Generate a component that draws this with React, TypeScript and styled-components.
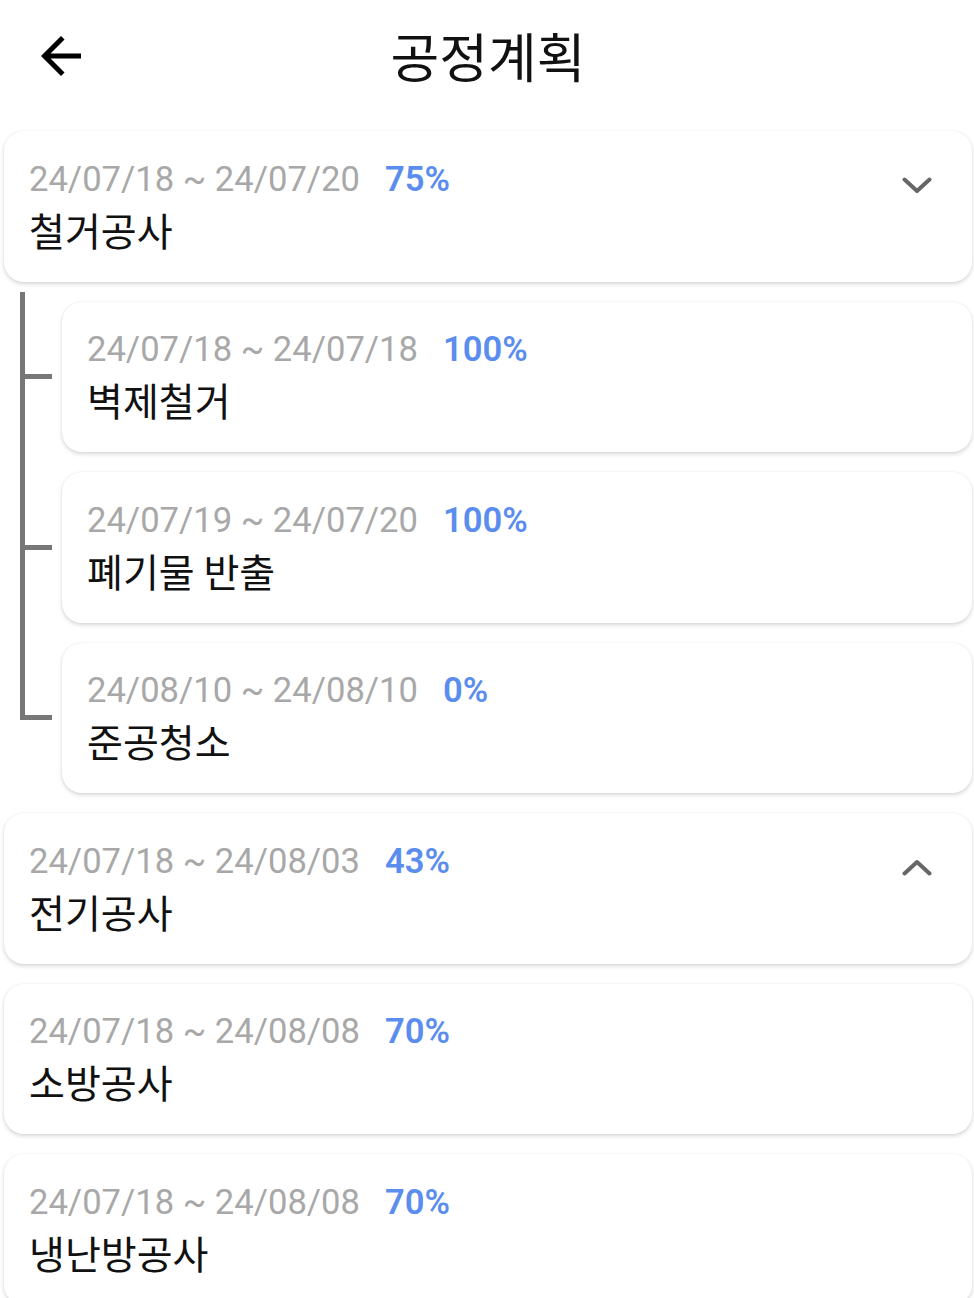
import React from "react";
import styled, { createGlobalStyle } from "styled-components";

const GlobalStyle = createGlobalStyle`
  * {
    box-sizing: border-box;
  }

  body {
    margin: 0;
    background: #ffffff;
    font-family: Roboto, "Noto Sans CJK KR", sans-serif;
  }
`;

const palette = {
  ink: "#111111",
  date: "#a8a8a8",
  percent: "#5b8def",
  rail: "#777777",
  icon: "#666666",
};

const Page = styled.div`
  display: flex;
  flex-direction: column;
  padding: 0 2px 0 4px;
`;

const Header = styled.header`
  display: grid;
  grid-template-columns: 100px 1fr 100px;
  align-items: center;
  height: 111px;
`;

const BackButton = styled.button`
  display: flex;
  align-items: center;
  justify-content: center;
  width: 60px;
  height: 60px;
  margin-left: 27px;
  padding: 0;
  border: 0;
  background: none;
  color: #000;
`;

const Title = styled.h1`
  margin: 0;
  text-align: center;
  font-family: "Noto Sans CJK KR", sans-serif;
  font-size: 53px;
  font-weight: 400;
  line-height: 1;
  color: ${palette.ink};
`;

const List = styled.div`
  display: flex;
  flex-direction: column;
  gap: 20px;
  padding-top: 20px;
`;

const Card = styled.div`
  display: flex;
  align-items: flex-start;
  height: 150.5px;
  padding: 27.5px 40px 0 25px;
  background: #fff;
  border-radius: 20px;
  box-shadow: 0 2px 4px rgba(0, 0, 0, 0.16), 0 0 2px rgba(0, 0, 0, 0.06);
`;

const Body = styled.div`
  flex: 1;
  display: flex;
  flex-direction: column;
`;

const Meta = styled.div`
  display: flex;
  align-items: baseline;
  gap: 25px;
  height: 40px;
  line-height: 40px;
  font-family: Roboto, sans-serif;
  font-size: 34.6px;
`;

const Dates = styled.span`
  color: ${palette.date};
`;

const Percent = styled.span`
  color: ${palette.percent};
  font-weight: 600;
`;

const Name = styled.div`
  margin-top: 6px;
  font-family: "Noto Sans CJK KR", sans-serif;
  font-size: 39px;
  line-height: 48px;
  color: ${palette.ink};
`;

const Toggle = styled.div`
  display: flex;
  margin-top: 18.5px;
  color: ${palette.icon};
`;

const SubList = styled.div`
  display: flex;
  flex-direction: column;
  margin: -10px 0;
`;

const SubRow = styled.div`
  display: grid;
  grid-template-columns: 58px 1fr;
`;

const Connector = styled.div`
  display: flex;
  flex-direction: column;
  width: 32px;
  margin-left: 16px;
`;

const UpperArm = styled.div`
  flex: 1 1 0;
  border-left: 5px solid ${palette.rail};
  border-bottom: 5px solid ${palette.rail};
`;

const LowerArm = styled.div<{ $last?: boolean }>`
  flex: 1 1 0;
  border-left: 5px solid ${({ $last }) => ($last ? "transparent" : palette.rail)};
`;

const CardSlot = styled.div`
  padding: 10px 0;
`;

type Task = {
  start: string;
  end: string;
  percent: number;
  name: string;
  toggle?: "up" | "down";
};

const Chevron = ({ dir }: { dir: "up" | "down" }) => (
  <svg width="30" height="17" viewBox="0 0 30 17" fill="none">
    <polyline
      points={dir === "down" ? "2.5,2.5 15,14 27.5,2.5" : "2.5,14.5 15,3 27.5,14.5"}
      stroke="currentColor"
      strokeWidth="4"
      strokeLinecap="round"
      strokeLinejoin="round"
    />
  </svg>
);

const TaskCard = ({ task }: { task: Task }) => (
  <Card>
    <Body>
      <Meta>
        <Dates>
          {task.start} ~ {task.end}
        </Dates>
        <Percent>{task.percent}%</Percent>
      </Meta>
      <Name>{task.name}</Name>
    </Body>
    {task.toggle && (
      <Toggle>
        <Chevron dir={task.toggle} />
      </Toggle>
    )}
  </Card>
);

const demolition: Task = {
  start: "24/07/18",
  end: "24/07/20",
  percent: 75,
  name: "철거공사",
  toggle: "down",
};

const demolitionSteps: Task[] = [
  { start: "24/07/18", end: "24/07/18", percent: 100, name: "벽제철거" },
  { start: "24/07/19", end: "24/07/20", percent: 100, name: "폐기물 반출" },
  { start: "24/08/10", end: "24/08/10", percent: 0, name: "준공청소" },
];

const otherTasks: Task[] = [
  { start: "24/07/18", end: "24/08/03", percent: 43, name: "전기공사", toggle: "up" },
  { start: "24/07/18", end: "24/08/08", percent: 70, name: "소방공사" },
  { start: "24/07/18", end: "24/08/08", percent: 70, name: "냉난방공사" },
];

export default function App() {
  return (
    <Page>
      <GlobalStyle />
      <Header>
        <BackButton aria-label="뒤로">
          <svg width="60" height="60" viewBox="0 0 24 24" fill="currentColor">
            <path d="M20 11H7.83l5.59-5.59L12 4l-8 8 8 8 1.41-1.41L7.83 13H20v-2z" />
          </svg>
        </BackButton>
        <Title>공정계획</Title>
        <span />
      </Header>
      <List>
        <TaskCard task={demolition} />
        <SubList>
          {demolitionSteps.map((step, index) => (
            <SubRow key={step.name}>
              <Connector>
                <UpperArm />
                <LowerArm $last={index === demolitionSteps.length - 1} />
              </Connector>
              <CardSlot>
                <TaskCard task={step} />
              </CardSlot>
            </SubRow>
          ))}
        </SubList>
        {otherTasks.map((task) => (
          <TaskCard key={task.name} task={task} />
        ))}
      </List>
    </Page>
  );
}
